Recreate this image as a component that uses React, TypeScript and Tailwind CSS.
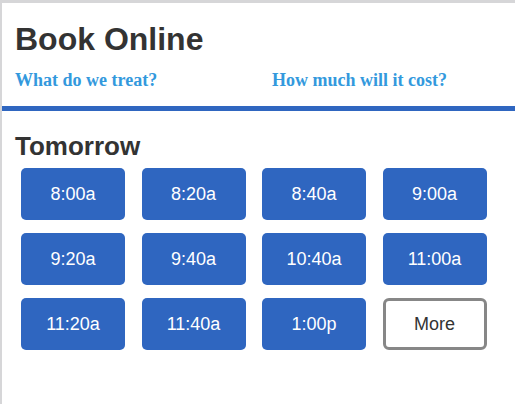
export default function App() {
  const times = ["8:00a", "8:20a", "8:40a", "9:00a", "9:20a", "9:40a", "10:40a", "11:00a", "11:20a", "11:40a", "1:00p"];

  return (
    <div className="w-[515px] min-h-[404px] border-t-[3px] border-l-2 border-[#d6d6d8] bg-white font-['Liberation_Sans',Arial,sans-serif]">
      {/* header */}
      <div className="border-b-[5px] border-[#2f66c0]">
        <h1 className="mt-5 pl-[13px] text-[32px] leading-[32px] font-bold text-[#333]">Book Online</h1>
        <div className="mt-4 mb-[17px] grid grid-cols-[257px_1fr] pl-[13px] font-['Liberation_Serif','Times_New_Roman',serif] text-[18px] leading-[18px] font-bold text-[#3399dd]">
          <a href="#">What do we treat?</a>
          <a href="#">How much will it cost?</a>
        </div>
      </div>

      {/* slots */}
      <div className="pl-[13px]">
        <h2 className="mt-[22px] text-[26px] leading-[26px] font-bold text-[#333]">Tomorrow</h2>
        <div className="mt-[9px] ml-[6px] grid grid-cols-[repeat(4,104px)] gap-x-[16.5px] gap-y-[13px]">
          {times.map((t) => (
            <button key={t} className="h-[52px] rounded-[5px] bg-[#2f66c0] text-[18px] text-white">
              {t}
            </button>
          ))}
          <button className="h-[52px] rounded-[6px] border-[3px] border-[#878787] bg-white text-[18px] text-[#333]">
            More
          </button>
        </div>
      </div>
    </div>
  );
}
